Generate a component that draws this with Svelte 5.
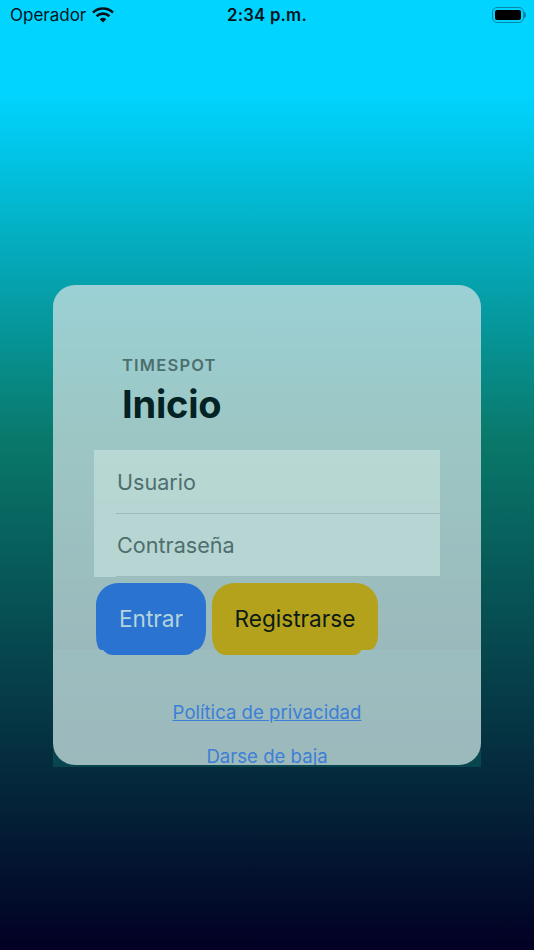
<script lang="ts">
	let usuario = $state('');
	let clave = $state('');
</script>

<div class="screen">
	<div class="statusbar">
		<div class="carrier">
			<span>Operador</span>
			<svg width="22" height="16" viewBox="0 0 22 16" aria-hidden="true">
				<path d="M1 5.6a14.4 14.4 0 0 1 20 0" class="arc" />
				<path d="M4.6 9.2a9.3 9.3 0 0 1 12.8 0" class="arc" />
				<path d="M11 15.6 7.7 12.2a4.7 4.7 0 0 1 6.6 0z" fill="#00141c" />
			</svg>
		</div>
		<span class="time">2:34 p.m.</span>
		<div class="battery"><i></i></div>
	</div>

	<div class="card">
		<div class="head">
			<span class="eyebrow">TIMESPOT</span>
			<h1>Inicio</h1>
		</div>
		<div class="fields">
			<div class="field"><input placeholder="Usuario" bind:value={usuario} /></div>
			<div class="field"><input placeholder="Contraseña" type="password" bind:value={clave} /></div>
		</div>
		<div class="buttons">
			<button class="btn blue">Entrar</button>
			<button class="btn gold">Registrarse</button>
		</div>
		<div class="footer">
			<div class="links">
				<a href="#privacidad">Política de privacidad</a>
				<a href="#baja" class="plain">Darse de baja</a>
			</div>
		</div>
	</div>
</div>

<style>
	:global(body) {
		margin: 0;
		font-family: Inter, "Liberation Sans", sans-serif;
	}

	.screen {
		width: 534px;
		height: 950px;
		overflow: hidden;
		isolation: isolate;
		display: flex;
		flex-direction: column;
		background: linear-gradient(180deg, #00d4ff 0%, #00d4ff 10%, #09796b 46%, #020024 100%);
	}

	.statusbar {
		height: 30px;
		flex: none;
		display: grid;
		grid-template-columns: 1fr auto 1fr;
		align-items: center;
		padding: 0 10px;
		color: #00141c;
		font-size: 17px;
	}
	.carrier { display: flex; align-items: center; gap: 6px; }
	.arc { fill: none; stroke: #00141c; stroke-width: 2.6; }
	.time { font-weight: 600; font-size: 16.8px; letter-spacing: 0.2px; }
	.battery {
		justify-self: end;
		position: relative;
		width: 32px;
		height: 16px;
		padding: 2px;
		box-sizing: border-box;
		border: 1px solid #0a86a8;
		border-radius: 5px;
	}
	.battery::after {
		content: '';
		position: absolute;
		right: -3px;
		top: 4px;
		width: 2px;
		height: 6px;
		border-radius: 0 2px 2px 0;
		background: #0a86a8;
	}
	.battery i {
		display: block;
		height: 100%;
		background: #000;
		border-radius: 2px;
	}

	.card {
		width: 428px;
		height: 480px;
		margin: 255px 0 0 53px;
		box-sizing: border-box;
		border-radius: 22px;
		background: rgba(208, 225, 226, 0.74);
		display: flex;
		flex-direction: column;
		position: relative;
	}

	.head {
		padding: 70px 0 0 69px;
		display: flex;
		flex-direction: column;
		height: 165px;
		flex: none;
		box-sizing: border-box;
	}
	.eyebrow {
		font-size: 16.5px;
		line-height: 20px;
		font-weight: 600;
		letter-spacing: 1.2px;
		color: #4c6f70;
	}
	h1 {
		margin: 6px 0 0;
		font-size: 38px;
		line-height: 46px;
		font-weight: 700;
		letter-spacing: -0.2px;
		color: #032224;
	}

	.fields {
		margin: 0 41px;
		background: rgba(206, 232, 226, 0.55);
	}
	.field {
		height: 63.5px;
		margin-left: 22px;
		box-sizing: border-box;
		border-bottom: 1px solid #9dbaba;
	}
	input {
		width: 100%;
		height: 100%;
		border: none;
		background: none;
		outline: none;
		padding: 1px 0 0 1px;
		box-sizing: border-box;
		font: 400 21.6px Inter, "Liberation Sans", sans-serif;
		color: #4c6b6b;
	}
	input::placeholder { color: #4f6e6e; opacity: 1; }

	.buttons {
		display: flex;
		flex: none;
		gap: 6px;
		margin: 6px 0 0 43px;
		position: relative;
		z-index: 1;
	}
	.btn {
		position: relative;
		height: 67px;
		border: none;
		border-radius: 22px;
		font: 400 22.6px Inter, "Liberation Sans", sans-serif;
		padding: 4px 0 0;
	}
	/* tail that pokes out under the footer edge */
	.btn::after {
		content: '';
		position: absolute;
		bottom: -5px;
		height: 20px;
		background: inherit;
	}
	.blue {
		width: 110px;
		background: #2a73d1;
		color: #b6d4dc;
		border-bottom-left-radius: 5px 15px;
		border-bottom-right-radius: 11px 20px;
	}
	.blue::after { left: 5px; right: 9px; border-radius: 0 0 12px 12px; }
	.gold {
		width: 166px;
		background: #b4a21d;
		color: #0b1a16;
		border-bottom-left-radius: 6px 15px;
		border-bottom-right-radius: 9px 14px;
	}
	.gold::after { left: 2px; right: 16px; border-radius: 0 0 8px 12px; }

	.footer {
		position: relative;
		flex: none;
		height: 117px;
	}
	/* tinted strip behind the card, shows at its bottom corners */
	.footer::before {
		content: '';
		position: absolute;
		inset: 0;
		z-index: -1;
		background: rgba(20, 130, 120, 0.3);
	}
	.links {
		display: flex;
		flex-direction: column;
		align-items: center;
		gap: 22px;
		padding-top: 51px;
		height: 115px;
		box-sizing: border-box;
		overflow: hidden;
		font-size: 18.6px;
		line-height: 22px;
	}
	a { color: #3d7fd6; }
	.plain { text-decoration: none; }
</style>
